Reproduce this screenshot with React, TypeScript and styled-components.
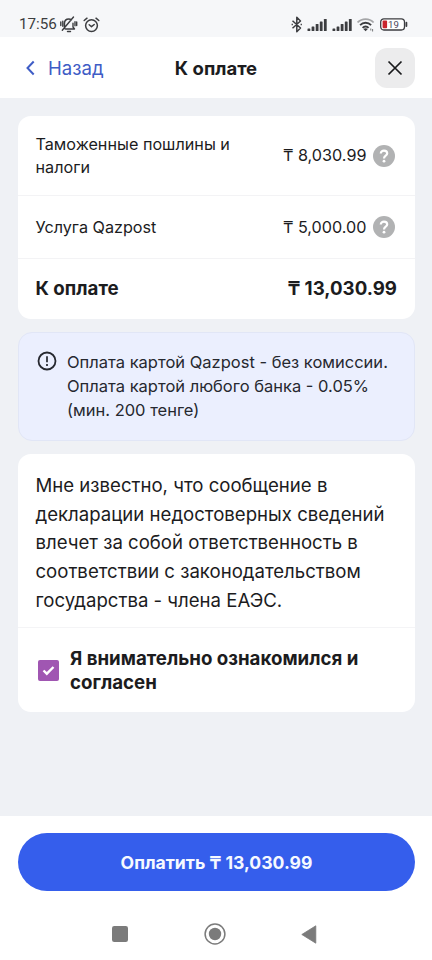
import React from "react";
import styled, { createGlobalStyle } from "styled-components";

const GlobalStyle = createGlobalStyle`
  * { box-sizing: border-box; }
  body { margin: 0; background: #eff1f5; }
  button { font: inherit; border: 0; padding: 0; background: none; cursor: pointer; }
  svg { display: block; flex: none; }
`;

const Screen = styled.div`
  width: 432px;
  height: 960px;
  display: flex;
  flex-direction: column;
  overflow: hidden;
  background: #eff1f5;
  color: #1c1c1e;
  font-family: Inter, "Noto Sans", sans-serif;
  white-space: nowrap;
`;

const StatusBar = styled.div`
  height: 37px;
  flex: none;
  display: flex;
  justify-content: space-between;
  padding: 11px 24px 0 19px;
  background: #f6f7f9;
  color: #3c3d40;
`;

const StatusGroup = styled.div<{ $gap: number }>`
  display: flex;
  align-items: center;
  gap: ${(p) => p.$gap}px;
  height: 27px;
`;

const Clock = styled.span`
  margin-right: -2px;
  font: 400 15.2px/27px Roboto, sans-serif;
`;

const Header = styled.header`
  height: 61px;
  flex: none;
  display: grid;
  grid-template-columns: 1fr auto 1fr;
  align-items: center;
  padding: 0 17px;
  background: #fff;
`;

const BackButton = styled.button`
  display: flex;
  align-items: center;
  gap: 12px;
  padding-left: 8px;
  color: #3f5dc6;
  font-size: 18.6px;
  line-height: 24px;
`;

const Title = styled.h1`
  margin: 0;
  font-size: 18.5px;
  line-height: 24px;
  font-weight: 700;
`;

const CloseButton = styled.button`
  justify-self: end;
  display: grid;
  place-items: center;
  width: 40px;
  height: 40px;
  border-radius: 12px;
  background: #ececed;
`;

const Content = styled.main`
  flex: 1;
  padding: 18px 17px 0 18px;
  display: flex;
  flex-direction: column;
  gap: 13px;
`;

const Card = styled.section`
  border-radius: 13px;
  background: #fff;
`;

const FeeRow = styled.div<{ $height: number; $total?: boolean }>`
  height: ${(p) => p.$height}px;
  display: flex;
  align-items: center;
  justify-content: space-between;
  padding: 0 ${(p) => (p.$total ? 18 : 20)}px 0 17.5px;
  border-bottom: ${(p) => (p.$total ? "0" : "1px solid #f3f3f5")};
  font-size: ${(p) => (p.$total ? 18.7 : 16.2)}px;
  line-height: 22.5px;
  font-weight: ${(p) => (p.$total ? 700 : 400)};
`;

const Line = styled.span`
  display: block;
`;

const Amount = styled.div`
  display: flex;
  align-items: center;
  gap: 6.5px;
`;

const Notice = styled.section`
  height: 109px;
  display: flex;
  gap: 10px;
  padding: 18px 0 0 18px;
  border: 1px solid #e1e6f6;
  border-radius: 14px;
  background: #ebeffe;
  color: #26282f;
  font-size: 16.5px;
  line-height: 24px;
`;

const NoticeText = styled.div`
  margin-top: -1px;
`;

const Statement = styled.p`
  margin: 0;
  height: 174px;
  padding: 17px 17.5px 0;
  border-bottom: 1px solid #f4f4f6;
  font-size: 18.6px;
  line-height: 28.7px;
`;

const Consent = styled.label`
  height: 84px;
  display: flex;
  align-items: center;
  gap: 11px;
  padding-left: 20px;
  font-size: 18.7px;
  line-height: 24px;
  font-weight: 700;
`;

const ConsentText = styled.span`
  margin-top: 2px;
`;

const Checkbox = styled.span`
  width: 21px;
  height: 21px;
  display: grid;
  place-items: center;
  border-radius: 2px;
  background: #a056b2;
`;

const Footer = styled.footer`
  height: 144px;
  flex: none;
  padding: 17px 17px 0 18px;
  background: #fff;
`;

const PayButton = styled.button`
  display: block;
  width: 100%;
  height: 58px;
  border-radius: 29px;
  background: #355eec;
  color: #f6f9ff;
  font-size: 17.6px;
  font-weight: 700;
`;

const SystemNav = styled.nav`
  display: flex;
  align-items: center;
  justify-content: space-between;
  height: 24px;
  margin-top: 31px;
  padding: 0 98px 0 94px;
`;

function MutedBell() {
  return (
    <svg width="18" height="17" viewBox="0 0 18 17" fill="none" stroke="#3c3d40" strokeWidth="1.4" strokeLinecap="round" strokeLinejoin="round">
      <path d="M4.5 12.5V7.2C4.5 4.7 6.2 3 8.8 3c1 0 1.900.3 2.600.8M13 7.200V11l1.500 2H5.500M7.500 15.500h3M2.300 14.300 13.500 1M.8 6v3.500M2.800 5.200v5M16.700 6v3.500M15 5.800v4" />
    </svg>
  );
}

function Alarm() {
  return (
    <svg width="17" height="16" viewBox="0 0 17 16" fill="none" stroke="#3c3d40" strokeWidth="1.5" strokeLinecap="round" strokeLinejoin="round">
      <circle cx="8.500" cy="8.600" r="5.900" />
      <path d="M1.200 3.500 4 1.200M15.800 3.500 13 1.200M6.200 7.700l2.300 2 2.700-2.200" />
    </svg>
  );
}

function Bluetooth() {
  return (
    <svg width="11" height="17" viewBox="0 0 11 17" fill="none" stroke="#3c3d40" strokeWidth="1.500" strokeLinejoin="round">
      <path d="M1.500 4.700 9.500 12 5.800 15.700V1.300L9.500 5 1.500 12.300" />
      <path d="M.6 8.500h1.300M9.600 8.500h1.300" />
    </svg>
  );
}

function Signal() {
  return (
    <svg width="20" height="14" viewBox="0 0 20 14" fill="#3c3d40">
      <rect x="0.500" y="10.500" width="2.800" height="2.500" rx=".6" />
      <rect x="4.600" y="8.500" width="2.800" height="4.500" rx=".6" />
      <rect x="8.700" y="6" width="2.800" height="7" rx=".6" />
      <rect x="12.800" y="3.400" width="2.800" height="9.600" rx=".6" />
      <rect x="16.900" y="1" width="2.800" height="12" rx=".6" />
    </svg>
  );
}

function Wifi() {
  return (
    <svg width="18" height="15" viewBox="0 0 18 15" fill="none" strokeWidth="1.800">
      <path d="M.6 5.500C4.900.9 12.300.9 16.600 5.500" stroke="#a5a6a8" />
      <path d="M3.100 8.200c3-3.300 8-3.300 11 0M5.600 10.900c1.700-1.900 4.300-1.900 6 0" stroke="#3c3d40" />
      <path d="M6.400 12 8.600 14.300 10.800 12C9.600 10.900 7.600 10.900 6.400 12Z" fill="#3c3d40" />
      <path d="M13.800 11.500v2M15.600 12v2.500" stroke="#77787a" strokeWidth="1" />
    </svg>
  );
}

function Battery() {
  return (
    <svg width="28" height="13" viewBox="0 0 28 13">
      <rect x=".7" y=".8" width="23.800" height="11.200" rx="3.200" fill="#fff" stroke="#3c3d40" strokeWidth="1.300" />
      <rect x="2.600" y="2.500" width="4.500" height="7.800" rx="1" fill="#c9252d" />
      <path d="M26.400 4.700v3.400" stroke="#3c3d40" strokeWidth="1.800" strokeLinecap="round" />
      <text x="8" y="9.900" fontFamily="Roboto, sans-serif" fontSize="9.600" fill="#4c4860">19</text>
    </svg>
  );
}

function Help() {
  return (
    <svg width="22" height="22" viewBox="0 0 22 22" fill="none">
      <circle cx="11" cy="11" r="11" fill="#b1b2b3" />
      <path d="M7.800 8.500c0-4 6.400-3.700 6.400 0 0 2.300-3.200 2.200-3.200 4.900" stroke="#fff" strokeWidth="2.200" />
      <circle cx="11" cy="16.200" r="1.400" fill="#fff" />
    </svg>
  );
}

function Warning() {
  return (
    <svg width="20" height="20" viewBox="0 0 20 20" fill="none" stroke="#26282f">
      <circle cx="10" cy="10" r="8.500" strokeWidth="1.800" />
      <path d="M10 5.300v5.900M10 13.100v1.800" strokeWidth="1.700" />
    </svg>
  );
}

export default function App() {
  return (
    <>
      <GlobalStyle />
      <Screen>
        <StatusBar>
          <StatusGroup $gap={5}>
            <Clock>17:56</Clock>
            <MutedBell />
            <Alarm />
          </StatusGroup>
          <StatusGroup $gap={5}>
            <Bluetooth />
            <Signal />
            <Signal />
            <Wifi />
            <Battery />
          </StatusGroup>
        </StatusBar>
        <Header>
          <BackButton>
            <svg width="11" height="16" viewBox="0 0 11 16" fill="none" stroke="#3f5dc6" strokeWidth="2">
              <path d="M8.700 1.500 2.500 8l6.200 6.500" />
            </svg>
            Назад
          </BackButton>
          <Title>К оплате</Title>
          <CloseButton aria-label="Закрыть">
            <svg width="16" height="16" viewBox="0 0 16 16" stroke="#18191b" strokeWidth="1.700">
              <path d="m1.500 1.500 13 13M14.500 1.500l-13 13" />
            </svg>
          </CloseButton>
        </Header>
        <Content>
          <Card>
            <FeeRow $height={80}>
              <div>
                <Line>Таможенные пошлины и</Line>
                <Line>налоги</Line>
              </div>
              <Amount>₸ 8,030.99 <Help /></Amount>
            </FeeRow>
            <FeeRow $height={63}>
              <span>Услуга Qazpost</span>
              <Amount>₸ 5,000.00 <Help /></Amount>
            </FeeRow>
            <FeeRow $height={60} $total>
              <span>К оплате</span>
              <span>₸ 13,030.99</span>
            </FeeRow>
          </Card>
          <Notice>
            <Warning />
            <NoticeText>
              <Line>Оплата картой Qazpost - без комиссии.</Line>
              <Line>Оплата картой любого банка - 0.05%</Line>
              <Line>(мин. 200 тенге)</Line>
            </NoticeText>
          </Notice>
          <Card>
            <Statement>
              <Line>Мне известно, что сообщение в</Line>
              <Line>декларации недостоверных сведений</Line>
              <Line>влечет за собой ответственность в</Line>
              <Line>соответствии с законодательством</Line>
              <Line>государства - члена ЕАЭС.</Line>
            </Statement>
            <Consent>
              <Checkbox>
                <svg width="13" height="11" viewBox="0 0 13 11" fill="none" stroke="#fff" strokeWidth="2.400">
                  <path d="m1.500 5.500 3.300 3.200L11.500 2" />
                </svg>
              </Checkbox>
              <ConsentText>
                <Line>Я внимательно ознакомился и</Line>
                <Line>согласен</Line>
              </ConsentText>
            </Consent>
          </Card>
        </Content>
        <Footer>
          <PayButton>Оплатить ₸ 13,030.99</PayButton>
          <SystemNav>
            <svg width="16" height="16" viewBox="0 0 16 16" fill="#7b7b7b">
              <rect width="16" height="16" rx="2.200" />
            </svg>
            <svg width="22" height="22" viewBox="0 0 22 22" fill="none">
              <circle cx="11" cy="11" r="9.900" stroke="#7b7b7b" strokeWidth="1.500" />
              <circle cx="11" cy="11" r="6.200" fill="#7b7b7b" />
            </svg>
            <svg width="16" height="19" viewBox="0 0 16 19" fill="#7b7b7b">
              <path d="M14.800.8v17.400L.8 9.500Z" stroke="#7b7b7b" strokeWidth=".8" strokeLinejoin="round" />
            </svg>
          </SystemNav>
        </Footer>
      </Screen>
    </>
  );
}
